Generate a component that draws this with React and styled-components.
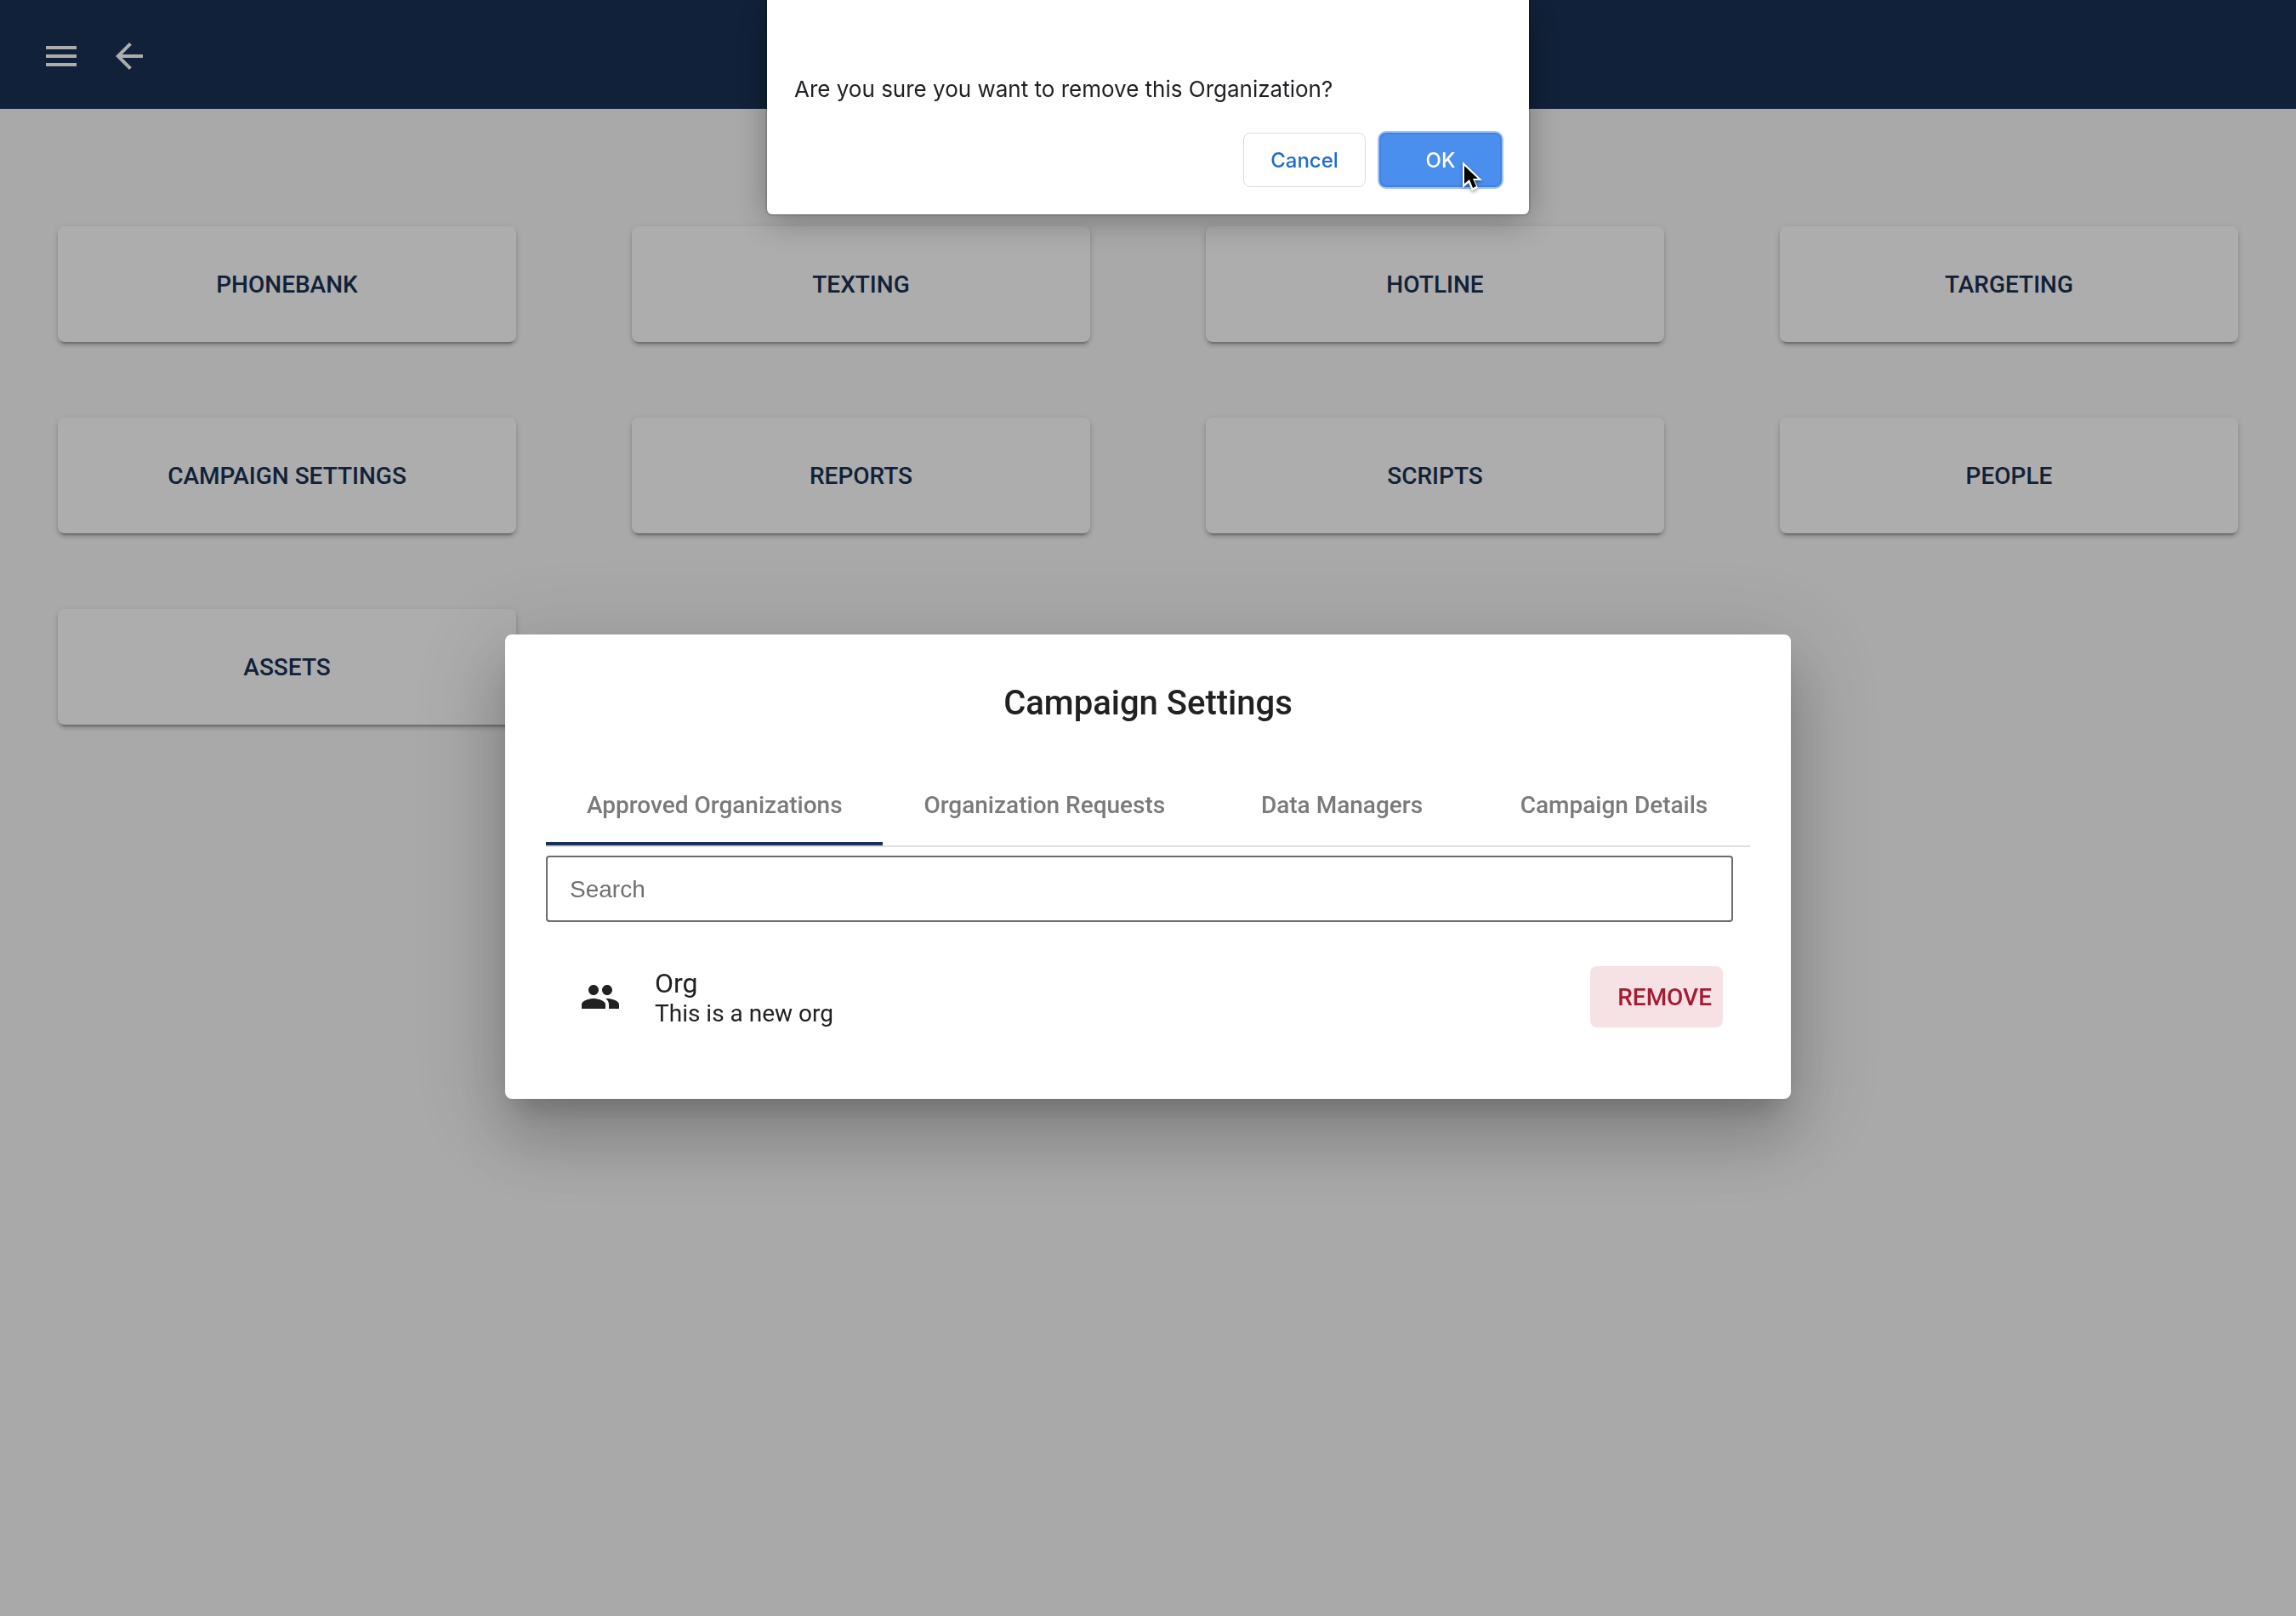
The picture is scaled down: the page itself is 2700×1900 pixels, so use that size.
import React from "react";
import styled, { createGlobalStyle } from "styled-components";
import { MdMenu, MdArrowBack, MdGroup } from "react-icons/md";

const NAVY = "#193155";

const GlobalStyle = createGlobalStyle`
  * { box-sizing: border-box; }
  body {
    margin: 0;
    background: #fafafa;
    font-family: Roboto, "Liberation Sans", sans-serif;
    color: #212121;
  }
  button, input { font-family: inherit; }
`;

const Page = styled.div`
  min-height: 100vh;
`;

const TopBar = styled.header`
  display: flex;
  align-items: center;
  gap: 32px;
  height: 128px;
  padding: 4px 48px 0;
  background: ${NAVY};
`;

const IconButton = styled.button`
  display: flex;
  padding: 0;
  border: 0;
  background: none;
  color: #fff;
  font-size: 48px;
  cursor: pointer;
`;

const CardGrid = styled.main`
  display: grid;
  grid-template-columns: repeat(4, 1fr);
  gap: 89px 136px;
  padding: 138px 68px;
`;

const CardButton = styled.button`
  height: 136px;
  border: 0;
  border-radius: 8px;
  background: #fff;
  color: ${NAVY};
  font-size: 28px;
  font-weight: 500;
  text-transform: uppercase;
  box-shadow:
    0 6px 2px -4px rgba(0, 0, 0, 0.2),
    0 4px 4px 0 rgba(0, 0, 0, 0.14),
    0 2px 10px 0 rgba(0, 0, 0, 0.12);
  cursor: pointer;
`;

const Backdrop = styled.div`
  position: fixed;
  inset: 0;
  display: flex;
  align-items: center;
  justify-content: center;
  padding-top: 138px;
  background: rgba(0, 0, 0, 0.32);
`;

const Modal = styled.section`
  width: 56%;
  padding: 48px 48px 84px;
  border-radius: 8px;
  background: #fff;
  box-shadow:
    0 22px 30px -14px rgba(0, 0, 0, 0.2),
    0 48px 76px 6px rgba(0, 0, 0, 0.14),
    0 20px 110px 22px rgba(0, 0, 0, 0.13);
`;

const ModalTitle = styled.h2`
  margin: 0 0 34px;
  font-size: 40px;
  line-height: 66px;
  font-weight: 500;
  text-align: center;
`;

const TabList = styled.div`
  display: flex;
  border-bottom: 2px solid #dedede;
`;

const Tab = styled.button`
  min-width: 320px;
  height: 100px;
  padding: 8px 48px 0;
  border: 0;
  border-bottom: 4px solid ${(p) => (p.$active ? NAVY : "transparent")};
  background: none;
  color: #7a7a7a;
  font-size: 28px;
  font-weight: 500;
  white-space: nowrap;
  cursor: pointer;
`;

const SearchField = styled.input`
  display: block;
  width: calc(100% - 20px);
  height: 78px;
  margin: 10px 0 52px;
  padding: 2px 26px 0;
  border: 2px solid #6c6c6c;
  border-radius: 4px;
  background: #fff;
  color: #212121;
  font-family: "Liberation Sans", Arial, sans-serif;
  font-size: 28px;
  outline: none;
  &::placeholder { color: #6f6f6f; opacity: 1; }
`;

const OrgList = styled.ul`
  margin: 0;
  padding: 0;
  list-style: none;
`;

const OrgRow = styled.li`
  display: flex;
  align-items: center;
  padding: 0 32px 0 40px;
  font-size: 48px;
`;

const OrgText = styled.div`
  flex: 1;
  padding-left: 40px;
`;

const OrgName = styled.div`
  font-size: 32px;
  line-height: 40px;
`;

const OrgNote = styled.div`
  font-size: 28px;
  line-height: 32px;
`;

const RemoveButton = styled.button`
  height: 72px;
  padding: 0 13px 0 32px;
  border: 0;
  border-radius: 8px;
  background: #f6e1e4;
  color: #a51c30;
  font-size: 28px;
  font-weight: 500;
  cursor: pointer;
`;

const Confirm = styled.div`
  position: fixed;
  top: 0;
  left: 50%;
  width: 896px;
  margin-left: -448px;
  padding: 87px 32px 32px;
  border-radius: 0 0 6px 6px;
  background: #fff;
  box-shadow: 0 8px 40px rgba(0, 0, 0, 0.3), 0 0 3px rgba(0, 0, 0, 0.5);
  font-family: Inter, "Liberation Sans", sans-serif;
`;

const ConfirmText = styled.p`
  margin: 0 0 33px;
  font-size: 26px;
  line-height: 36px;
  color: #202124;
`;

const ConfirmActions = styled.div`
  display: flex;
  justify-content: flex-end;
  gap: 16px;
`;

const ConfirmButton = styled.button`
  position: relative;
  width: 144px;
  height: 64px;
  padding: 0;
  border: ${(p) => (p.$primary ? "2px solid #4580e0" : "1px solid #dadce0")};
  border-radius: 8px;
  background: ${(p) => (p.$primary ? "#4b8fee" : "#fff")};
  color: ${(p) => (p.$primary ? "#fff" : "#1f6bd0")};
  box-shadow: ${(p) => (p.$primary ? "0 0 0 2px #9fc2f8" : "none")};
  font-size: 24px;
  font-weight: 500;
  cursor: pointer;
`;

const Pointer = styled.svg`
  position: absolute;
  left: 96px;
  top: 32px;
  width: 24px;
  height: 36px;
  overflow: visible;
  filter: drop-shadow(0 2px 2px rgba(0, 0, 0, 0.4));
`;

const CARDS = [
  "Phonebank", "Texting", "Hotline", "Targeting",
  "Campaign Settings", "Reports", "Scripts", "People", "Assets",
];

const TABS = ["Approved Organizations", "Organization Requests", "Data Managers", "Campaign Details"];

const ORGS = [{ name: "Org", note: "This is a new org" }];

export default function App() {
  return (
    <>
      <GlobalStyle />
      <Page>
        <TopBar>
          <IconButton aria-label="Menu"><MdMenu /></IconButton>
          <IconButton aria-label="Back"><MdArrowBack /></IconButton>
        </TopBar>
        <CardGrid>
          {CARDS.map((c) => <CardButton key={c}>{c}</CardButton>)}
        </CardGrid>
      </Page>
      <Backdrop>
        <Modal role="dialog" aria-labelledby="settings-title">
          <ModalTitle id="settings-title">Campaign Settings</ModalTitle>
          <TabList role="tablist">
            {TABS.map((t, i) => (
              <Tab key={t} role="tab" aria-selected={i === 0} $active={i === 0}>{t}</Tab>
            ))}
          </TabList>
          <SearchField type="text" placeholder="Search" aria-label="Search" />
          <OrgList>
            {ORGS.map((o) => (
              <OrgRow key={o.name}>
                <MdGroup />
                <OrgText>
                  <OrgName>{o.name}</OrgName>
                  <OrgNote>{o.note}</OrgNote>
                </OrgText>
                <RemoveButton>REMOVE</RemoveButton>
              </OrgRow>
            ))}
          </OrgList>
        </Modal>
      </Backdrop>
      <Confirm role="alertdialog" aria-labelledby="confirm-text">
        <ConfirmText id="confirm-text">Are you sure you want to remove this Organization?</ConfirmText>
        <ConfirmActions>
          <ConfirmButton>Cancel</ConfirmButton>
          <ConfirmButton $primary>
            OK
            <Pointer viewBox="0 0 24 36" aria-hidden="true">
              <path d="M0 0 L0 31 L7 25 L11 34 L18 31 L14 22 L23 22 Z" fill="#fff" />
              <path d="M2 5 L2 26 L8 21 L12 31 L16 29 L12 20 L18 20 Z" fill="#000" />
            </Pointer>
          </ConfirmButton>
        </ConfirmActions>
      </Confirm>
    </>
  );
}
